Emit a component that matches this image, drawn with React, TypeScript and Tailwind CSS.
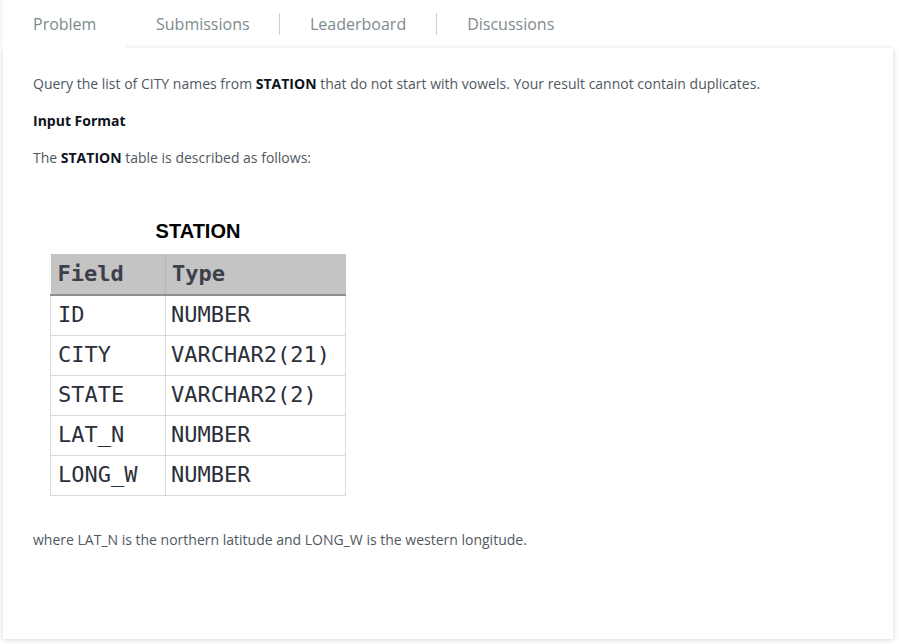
import React from 'react';

const tabs = ['Problem', 'Submissions', 'Leaderboard', 'Discussions'];

const rows: [string, string][] = [
  ['ID', 'NUMBER'],
  ['CITY', 'VARCHAR2(21)'],
  ['STATE', 'VARCHAR2(2)'],
  ['LAT_N', 'NUMBER'],
  ['LONG_W', 'NUMBER'],
];

const StationTable: React.FC = () => (
  <div className="ml-[17px] mt-[51px] w-[296px]">
    <div
      className="text-center text-[20px] font-bold leading-[24px] text-black"
      style={{ fontFamily: '"Liberation Sans", Arial, sans-serif' }}
    >
      STATION
    </div>
    <table
      className="mt-[11px] w-[296px] border-collapse text-[22px] text-[#2b2f3a]"
      style={{ fontFamily: '"DejaVu Sans Mono", monospace' }}
    >
      <thead>
        <tr className="h-[41px] bg-[#c4c4c4] border-b-2 border-[#8e8e8e]">
          <th className="w-[115px] border-r border-[#b3b3b3] pl-[7px] text-left font-bold text-[#3b404a]">Field</th>
          <th className="pl-[6px] text-left font-bold text-[#3b404a]">Type</th>
        </tr>
      </thead>
      <tbody>
        {rows.map(([f, t]) => (
          <tr key={f} className="h-[40px] border border-[#d9d9d9]">
            <td className="border-r border-[#d9d9d9] pl-[7px]">{f}</td>
            <td className="pl-[5px]">{t}</td>
          </tr>
        ))}
      </tbody>
    </table>
  </div>
);

const App: React.FC = () => {
  return (
    <div
      className="w-[899px] h-[644px] bg-white overflow-hidden"
      style={{ fontFamily: '"Open Sans", sans-serif' }}
    >
      <div className="flex h-[48px] items-center pl-[3px]">
        {tabs.map((t, i) => (
          <React.Fragment key={t}>
            {i >= 2 && <div className="h-[22px] w-px bg-[#c9cfd3]" />}
            <div
              className={`flex h-full items-center text-[16px] text-[#7d8a8f] ${
                i === 0
                  ? 'relative z-10 w-[123px] bg-white pl-[30px] shadow-[-3px_-2px_5px_rgba(0,0,0,0.05)]'
                  : i === 1
                  ? 'w-[153px] pl-[30px]'
                  : 'px-[30px]'
              }`}
            >
              {t}
            </div>
          </React.Fragment>
        ))}
      </div>
      <div className="ml-[3px] h-[591px] w-[890px] bg-white px-[30px] pt-[26px] text-[14px] leading-[20px] text-[#50585f] shadow-[0_1px_6px_rgba(0,0,0,0.16)]">
        <p>
          Query the list of CITY names from <b className="text-[#0e141e]">STATION</b> that do not start with vowels. Your result cannot contain duplicates.
        </p>
        <p className="mt-[17px] font-bold text-[#0e141e]">Input Format</p>
        <p className="mt-[17px]">
          The <b className="text-[#0e141e]">STATION</b> table is described as follows:
        </p>
        <StationTable />
        <p className="mt-[34px]">where LAT_N is the northern latitude and LONG_W is the western longitude.</p>
      </div>
    </div>
  );
};

export default App;
